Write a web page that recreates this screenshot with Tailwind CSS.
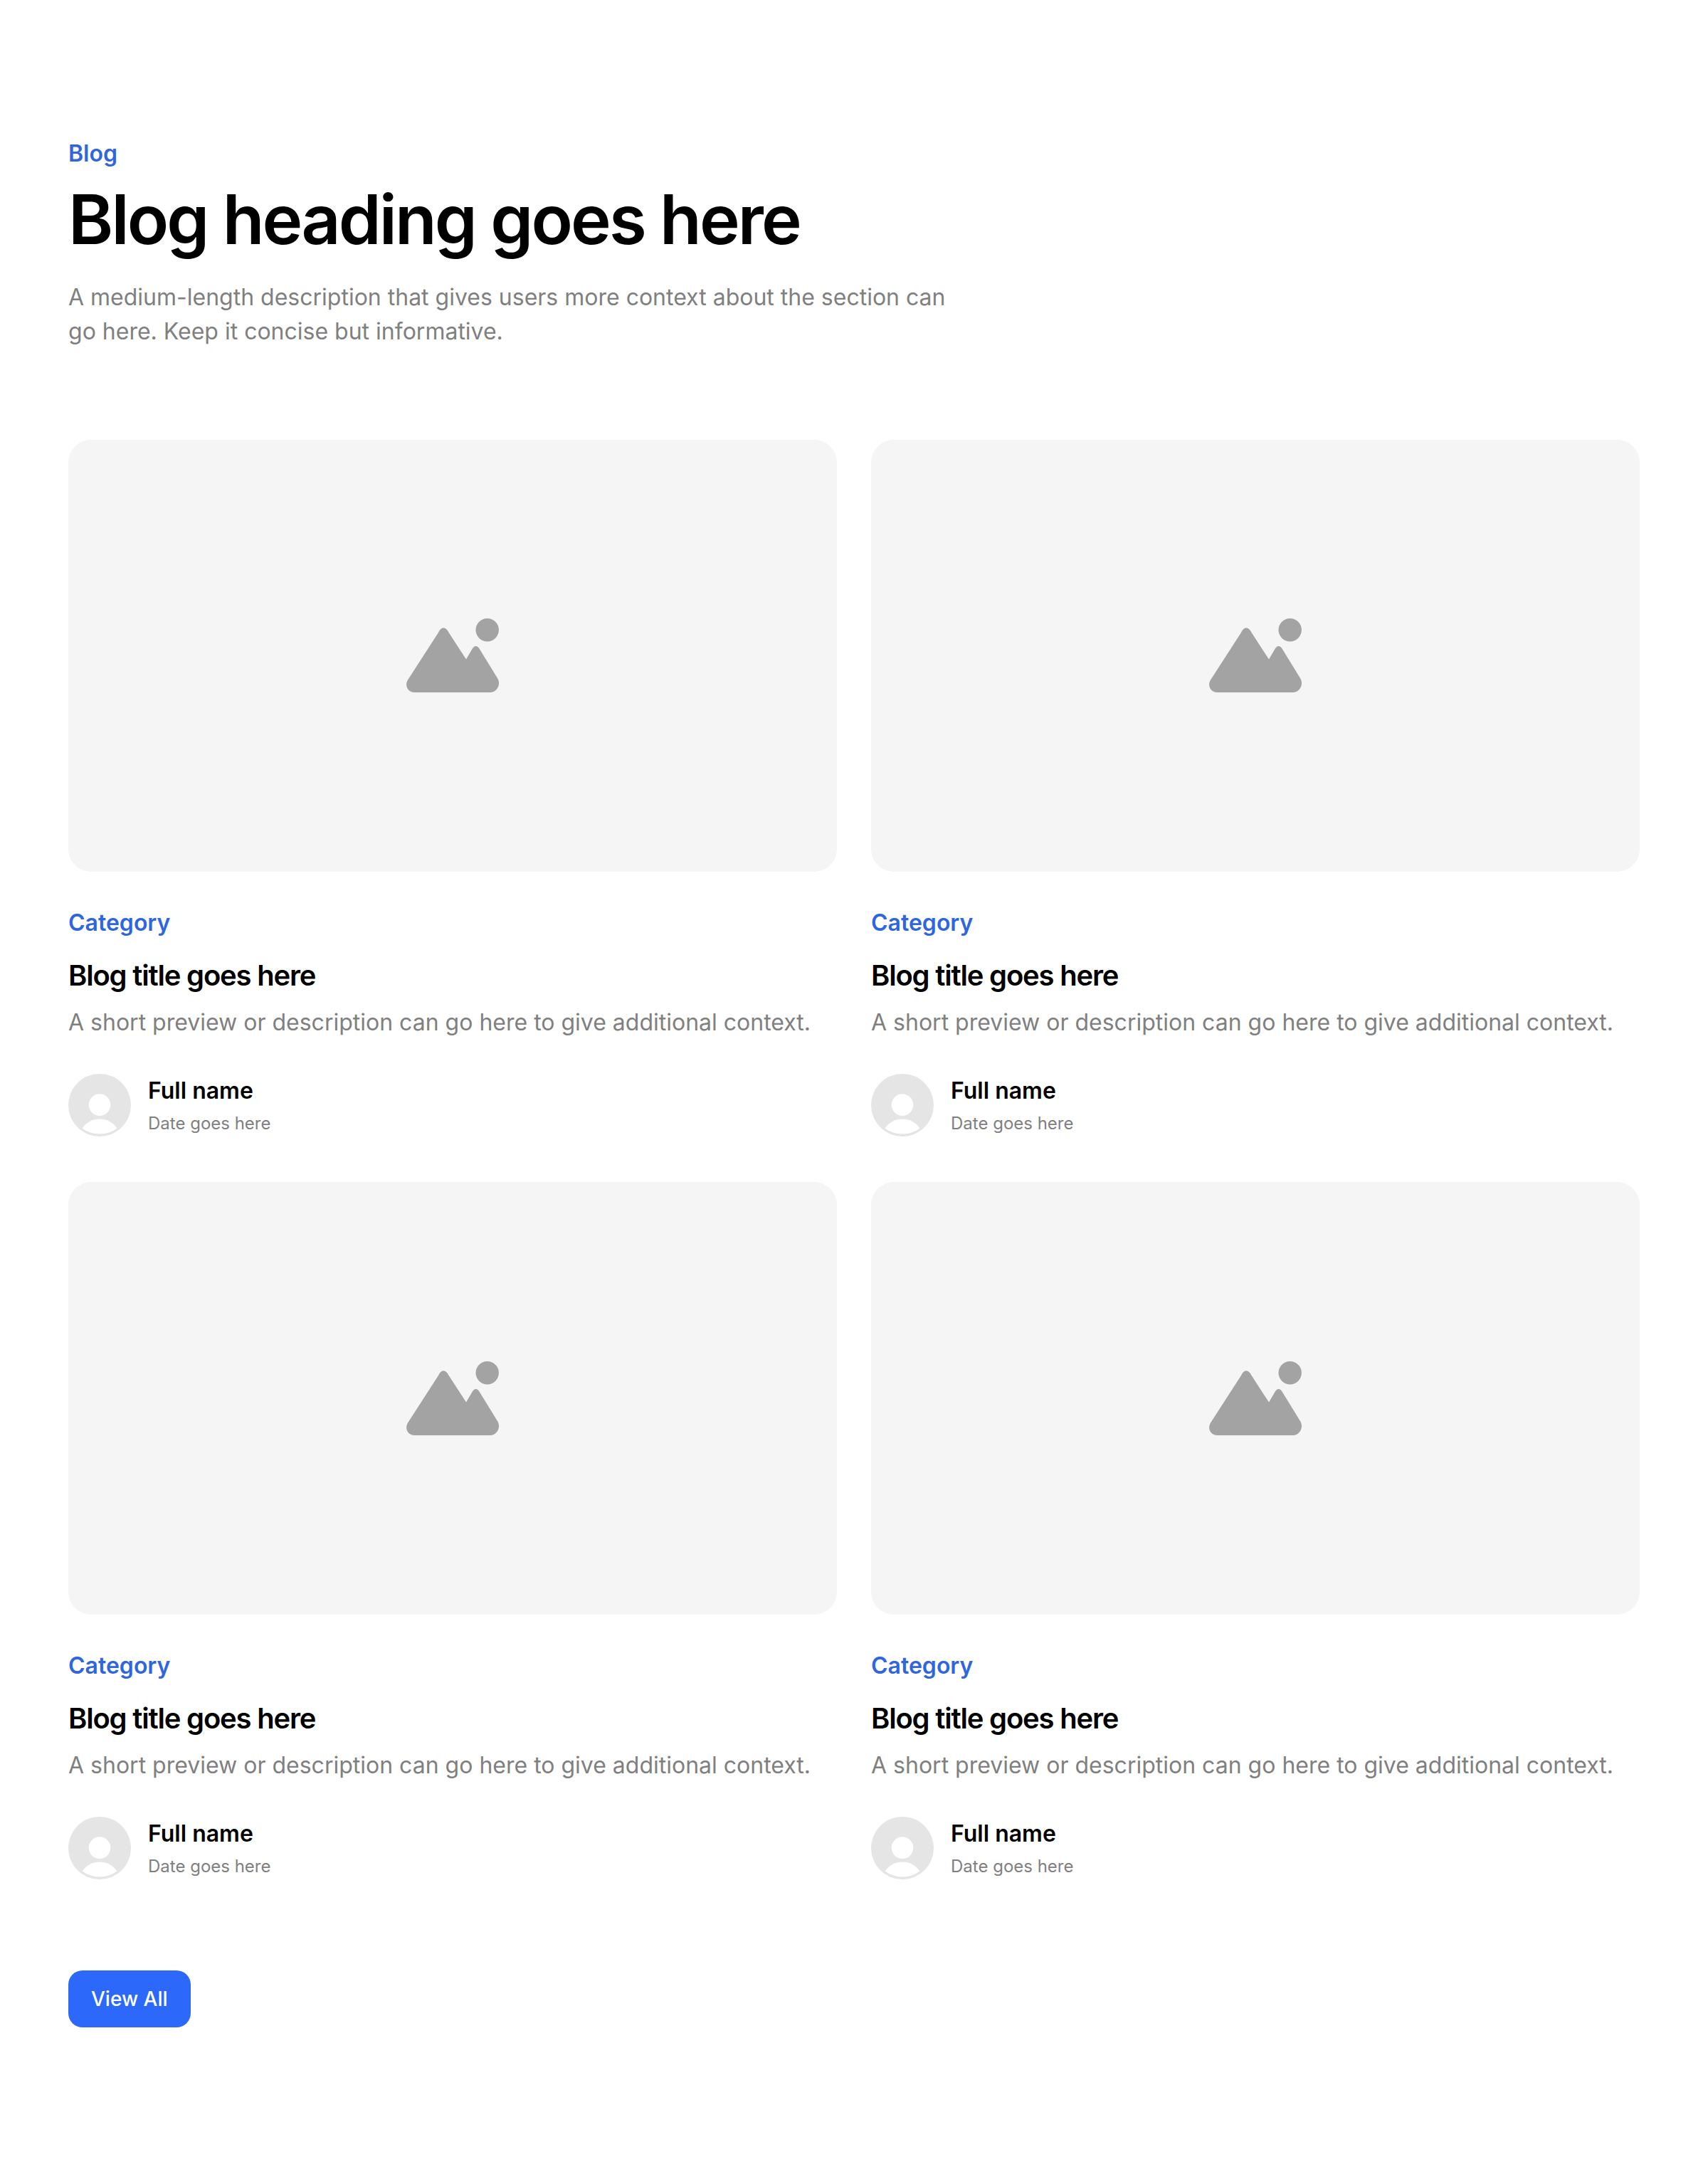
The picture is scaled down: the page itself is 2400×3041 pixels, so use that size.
<!DOCTYPE html>
<html lang="en">
<head>
    <meta charset="UTF-8">
    <meta name="viewport" content="width=device-width, initial-scale=1.0">
    <title>Blog</title>
    <script src="https://cdn.jsdelivr.net/npm/@tailwindcss/browser@4"></script>
</head>
<body class="bg-white text-black font-['Inter',sans-serif]">
    <!-- Shared icons -->
    <svg class="hidden">
        <symbol id="imageIcon" viewBox="0 0 130 104">
            <circle cx="113.7" cy="16.2" r="16.2"/>
            <path d="M2 86.5 L44.8 20.2 C48.8 11 55.3 11 59.8 20.2 L84 57.5 L92.5 43 C95.5 37.8 99.8 37.8 102.8 43 L128.3 84.5 C133 93 127.5 104 117.5 104 H11.5 C2 104 -2.8 94.5 2 86.5 Z"/>
        </symbol>
        <symbol id="avatarIcon" viewBox="0 0 88 88">
            <circle cx="44" cy="44" r="44" fill="#e5e5e5"/>
            <circle cx="44" cy="43.6" r="15.3" fill="#fff"/>
            <path d="M19.6 76.4 A29.5 29.5 0 0 1 68.4 76.4 A40.5 40.5 0 0 1 19.6 76.4 Z" fill="#fff"/>
        </symbol>
    </svg>

    <section class="px-24 py-48">
        <!-- Heading -->
        <header class="w-[1280px]">
            <p class="text-[32px] leading-[48px] font-semibold text-[#2f66de]">Blog</p>
            <h1 class="mt-4 text-8xl leading-[1.1] font-semibold tracking-[-0.03em]">Blog heading goes here</h1>
            <p class="mt-8 text-[32px] leading-[48px] text-[#808080]">A medium-length description that gives users more context about the section can go here. Keep it concise but informative.</p>
        </header>

        <!-- Posts -->
        <div class="mt-32 grid grid-cols-2 gap-x-12 gap-y-16">
            <article>
                <div class="flex h-[607.5px] items-center justify-center rounded-[32px] bg-[#f5f5f5]">
                    <svg class="h-[104px] w-[130px] fill-[#a3a3a3]"><use href="#imageIcon"/></svg>
                </div>
                <p class="mt-12 text-[32px] leading-[48px] font-semibold text-[#2f66de]">Category</p>
                <h2 class="mt-6 text-[40px] leading-[52px] font-semibold tracking-[-0.03em]">Blog title goes here</h2>
                <p class="mt-4 text-[32px] leading-[48px] text-[#808080]">A short preview or description can go here to give additional context.</p>
                <div class="mt-12 flex items-center gap-6">
                    <svg class="size-[88px]"><use href="#avatarIcon"/></svg>
                    <div>
                        <p class="text-[32px] leading-[48px] font-semibold">Full name</p>
                        <p class="mt-1 text-2xl leading-9 text-[#808080]">Date goes here</p>
                    </div>
                </div>
            </article>
            <article>
                <div class="flex h-[607.5px] items-center justify-center rounded-[32px] bg-[#f5f5f5]">
                    <svg class="h-[104px] w-[130px] fill-[#a3a3a3]"><use href="#imageIcon"/></svg>
                </div>
                <p class="mt-12 text-[32px] leading-[48px] font-semibold text-[#2f66de]">Category</p>
                <h2 class="mt-6 text-[40px] leading-[52px] font-semibold tracking-[-0.03em]">Blog title goes here</h2>
                <p class="mt-4 text-[32px] leading-[48px] text-[#808080]">A short preview or description can go here to give additional context.</p>
                <div class="mt-12 flex items-center gap-6">
                    <svg class="size-[88px]"><use href="#avatarIcon"/></svg>
                    <div>
                        <p class="text-[32px] leading-[48px] font-semibold">Full name</p>
                        <p class="mt-1 text-2xl leading-9 text-[#808080]">Date goes here</p>
                    </div>
                </div>
            </article>
            <article>
                <div class="flex h-[607.5px] items-center justify-center rounded-[32px] bg-[#f5f5f5]">
                    <svg class="h-[104px] w-[130px] fill-[#a3a3a3]"><use href="#imageIcon"/></svg>
                </div>
                <p class="mt-12 text-[32px] leading-[48px] font-semibold text-[#2f66de]">Category</p>
                <h2 class="mt-6 text-[40px] leading-[52px] font-semibold tracking-[-0.03em]">Blog title goes here</h2>
                <p class="mt-4 text-[32px] leading-[48px] text-[#808080]">A short preview or description can go here to give additional context.</p>
                <div class="mt-12 flex items-center gap-6">
                    <svg class="size-[88px]"><use href="#avatarIcon"/></svg>
                    <div>
                        <p class="text-[32px] leading-[48px] font-semibold">Full name</p>
                        <p class="mt-1 text-2xl leading-9 text-[#808080]">Date goes here</p>
                    </div>
                </div>
            </article>
            <article>
                <div class="flex h-[607.5px] items-center justify-center rounded-[32px] bg-[#f5f5f5]">
                    <svg class="h-[104px] w-[130px] fill-[#a3a3a3]"><use href="#imageIcon"/></svg>
                </div>
                <p class="mt-12 text-[32px] leading-[48px] font-semibold text-[#2f66de]">Category</p>
                <h2 class="mt-6 text-[40px] leading-[52px] font-semibold tracking-[-0.03em]">Blog title goes here</h2>
                <p class="mt-4 text-[32px] leading-[48px] text-[#808080]">A short preview or description can go here to give additional context.</p>
                <div class="mt-12 flex items-center gap-6">
                    <svg class="size-[88px]"><use href="#avatarIcon"/></svg>
                    <div>
                        <p class="text-[32px] leading-[48px] font-semibold">Full name</p>
                        <p class="mt-1 text-2xl leading-9 text-[#808080]">Date goes here</p>
                    </div>
                </div>
            </article>
        </div>

        <!-- View all -->
        <button class="mt-32 block h-20 rounded-[20px] bg-[#2c68f9] px-8 text-[28px] leading-10 font-medium text-white">View All</button>
    </section>
</body>
</html>
